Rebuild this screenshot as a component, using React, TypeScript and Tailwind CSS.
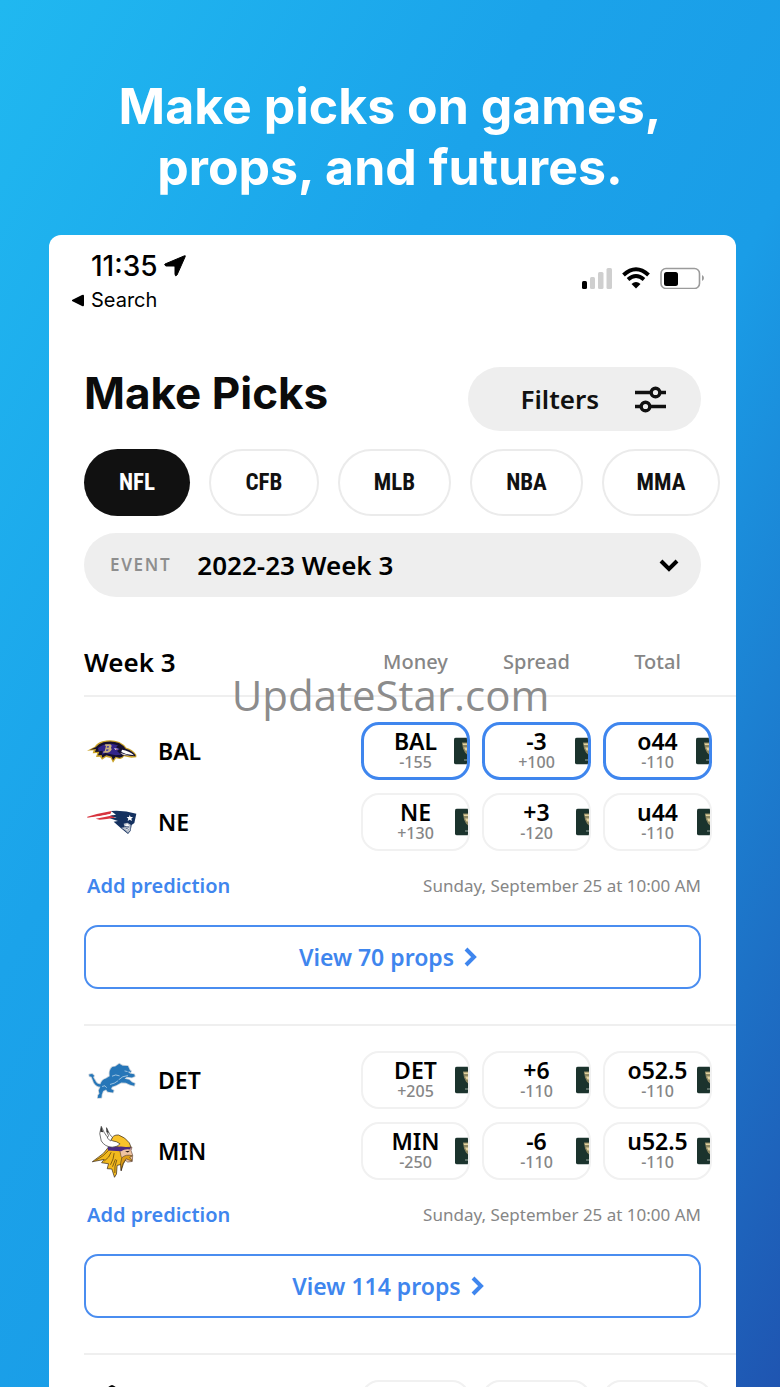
import { useState } from "react";
import { ChevronDown, ChevronRight } from "lucide-react";

type Odds = { label: string; price: string };

type Team = {
  code: string;
  logo: () => React.JSX.Element;
  odds: Odds[];
};

type Game = {
  id: string;
  teams: Team[];
  startsAt: string;
  props: number;
};

const LEAGUES = [
  { name: "NFL", width: "w-[106px]" },
  { name: "CFB", width: "w-[110px]" },
  { name: "MLB", width: "w-[113px]" },
  { name: "NBA", width: "w-[113px]" },
  { name: "MMA", width: "w-[118px]" },
];

function RavensLogo() {
  return (
    <svg viewBox="50 318 156 78" className="w-[52px] h-[26px]" aria-hidden="true">
      <path
        d="M53 356 L76 344 Q84 332 100 328 Q126 321 150 330 Q164 337 171 347 Q190 352 201 368 L201 376 L186 377 L164 373 Q160 382 151 381 L140 379 L131 392 L124 378 L110 375 L98 383 L92 374 L80 375 L84 363 L70 364 L73 355 Z"
        fill="#c9a227"
      />
      <path
        d="M62 353 L79 346 Q88 335 102 331 Q128 325 149 333 Q162 340 169 350 Q188 355 198 369 L198 373 L164 370 Q158 378 149 377 L139 374 L131 385 L127 374 L111 370 L99 377 L97 369 L86 370 L90 359 L77 360 L80 351 Z"
        fill="#16102e"
      />
      <path d="M86 348 Q100 335 126 335 L146 340 L140 346 L152 351 L143 357 L155 368 L140 370 L124 367 L108 363 L98 369 L100 356 L88 358 Z" fill="#33258a" />
      <path d="M158 353 Q180 356 194 370 L170 366 L156 360 Z" fill="#fff" />
      <path d="M152 362 L182 371 L160 368 Z" fill="#e8e6ef" />
      <path d="M108 337 h14 q8 2 3 10 q5 5 -1 10 q-4 5 -10 5 h-13 l2 -4 h3 l4 -17 h-4 z" fill="#cbb27a" />
      <path d="M113 342 h6 l-1 5 h-6 z M111 352 h7 l-2 5 h-6 z" fill="#54479b" />
      <path d="M134 348 L148 351 L138 354 Z" fill="#d7d2e6" />
      <path d="M140 351 l5 1 l-4 1 z" fill="#c62032" />
    </svg>
  );
}

function PatriotsLogo() {
  return (
    <svg viewBox="50 535 150 78" className="w-[50px] h-[26px]" aria-hidden="true">
      <path d="M51 558 Q84 548 124 541 L120 550 Q88 557 51 561 Z" fill="#d8343f" />
      <path d="M60 561 Q92 557 122 550 L118 556 Q94 561 60 563 Z" fill="#fff" />
      <path d="M76 564 Q104 559 128 554 L134 561 Q108 565 88 567 Z" fill="#d8343f" />
      <path
        d="M122 541 Q160 538 198 549 L192 577 L184 583 L181 600 L173 610 L152 593 L130 573 L143 571 L118 563 L139 561 L119 555 L137 552 Z"
        fill="#14315f"
      />
      <path d="M178 553 l3 6 7 0 -5 5 2 7 -7 -4 -6 4 2 -7 -5 -5 7 0 z" fill="#fff" />
      <path d="M160 579 L171 576 L181 582 L180 599 L173 607 L164 599 L153 591 L163 590 Z" fill="#b9c1cc" />
      <path d="M164 583 l8 -3 5 5 -9 3 z M165 594 l12 -2 -4 7 z" fill="#fff" />
      <path d="M162 587 l14 2 M166 592 l9 4" stroke="#14315f" strokeWidth="2" fill="none" />
    </svg>
  );
}

function LionsLogo() {
  return (
    <svg viewBox="48 62 156 118" className="w-[52px] h-[39px]" aria-hidden="true">
      <path
        d="M57 103 L66 101 L72 107 L69 111 L78 126 Q83 133 91 132 Q95 119 108 115 L119 108 Q116 89 127 80 L136 79 L148 70 L158 76 L174 77 L180 90 L184 93 L179 100 L193 102 L195 108 L186 112 L171 110 L164 116 L178 119 L186 126 L195 130 L193 137 L181 134 L168 128 L154 127 L139 135 L126 140 L123 147 L131 151 L129 157 L113 155 L108 148 L99 153 L95 163 L94 173 L83 174 L84 166 L88 161 L86 151 L91 140 Q79 140 71 127 L64 110 L58 108 Z"
        fill="#2676b8"
        stroke="#c9d3dc"
        strokeWidth="5"
        strokeLinejoin="round"
        paintOrder="stroke"
      />
      <path
        d="M126 108 Q137 101 149 107 M146 119 Q157 107 174 106 M120 133 Q135 130 144 122 M96 139 Q106 133 110 143 M164 92 L173 94"
        fill="none"
        stroke="#d9e8f3"
        strokeWidth="2"
      />
      <path d="M176 94 l6 1 -5 3 z" fill="#fff" />
    </svg>
  );
}

function VikingsLogo() {
  return (
    <svg viewBox="60 252 130 160" className="w-[43px] h-[53px]" aria-hidden="true">
      <path
        d="M116 315 L178 323 L173 343 L158 369 L151 391 L151 371 L139 374 L137 400 L131 410 L123 385 L109 384 L113 369 L92 366 L100 356 L64 363 Q84 348 98 337 Z"
        fill="#f2b91d"
        stroke="#2a1c14"
        strokeWidth="2"
      />
      <path d="M74 359 Q98 347 113 329 M100 361 Q116 350 121 334 M119 372 Q129 354 130 337 M132 397 Q130 378 138 357 M125 378 L134 355" stroke="#6b4a10" strokeWidth="2.5" fill="none" />
      <path d="M146 323 L184 319 L181 329 L186 343 L185 362 L171 364 L160 356 L151 348 Z" fill="#efc3a1" stroke="#3a2016" strokeWidth="1.5" />
      <path d="M121 296 Q126 281 143 282 Q164 289 176 306 L181 319 L150 321 L118 312 Z" fill="#f8c22b" stroke="#2a1c14" strokeWidth="2" />
      <path d="M111 315 Q130 319 150 317 L180 320 L179 326 Q162 323 151 331 L111 329 Z" fill="#4b2a82" />
      <path
        d="M91 256 Q82 278 91 300 Q102 318 124 319 Q141 318 148 309 Q138 301 126 300 Q108 296 91 256 Z"
        fill="#fff"
        stroke="#2c2c2c"
        strokeWidth="2"
      />
      <path d="M107 260 Q107 275 113 284 L109 291 L119 300 L125 289 L117 281 Z" fill="#fff" stroke="#2c2c2c" strokeWidth="2" />
      <path d="M91 256 L88 272 L97 274 Z M107 260 L107 273 L114 277 Z" fill="#333" />
      <path d="M153 351 Q165 339 185 345 L177 350 Q184 355 183 361 L166 354 L155 371 L151 388 Q146 371 153 351 Z" fill="#dd9c16" stroke="#2a1c14" strokeWidth="1.5" />
      <path d="M163 331 L178 330 L171 335 Z" fill="#2a1c14" />
    </svg>
  );
}

function SaintsLogo() {
  return (
    <svg viewBox="0 0 48 48" className="w-12 h-12" aria-hidden="true">
      <path
        d="M24 0 Q27 1 30 4 Q33 13 28 23 Q32 14 40 17 Q46 22 40 29 Q36 25 32 31 L34 35 L28 37 L24 48 L20 37 L14 35 L16 31 Q12 25 8 29 Q2 22 8 17 Q16 14 20 23 Q15 13 18 4 Q21 1 24 0 Z"
        fill="#000"
      />
    </svg>
  );
}

const GAMES: Game[] = [
  {
    id: "bal-ne",
    startsAt: "Sunday, September 25 at 10:00 AM",
    props: 70,
    teams: [
      {
        code: "BAL",
        logo: RavensLogo,
        odds: [
          { label: "BAL", price: "-155" },
          { label: "-3", price: "+100" },
          { label: "o44", price: "-110" },
        ],
      },
      {
        code: "NE",
        logo: PatriotsLogo,
        odds: [
          { label: "NE", price: "+130" },
          { label: "+3", price: "-120" },
          { label: "u44", price: "-110" },
        ],
      },
    ],
  },
  {
    id: "det-min",
    startsAt: "Sunday, September 25 at 10:00 AM",
    props: 114,
    teams: [
      {
        code: "DET",
        logo: LionsLogo,
        odds: [
          { label: "DET", price: "+205" },
          { label: "+6", price: "-110" },
          { label: "o52.5", price: "-110" },
        ],
      },
      {
        code: "MIN",
        logo: VikingsLogo,
        odds: [
          { label: "MIN", price: "-250" },
          { label: "-6", price: "-110" },
          { label: "u52.5", price: "-110" },
        ],
      },
    ],
  },
];

// Sportsbook badge that slides under the right edge of every odds button
function BookBadge() {
  return (
    <svg viewBox="0 0 13 27" className="absolute right-0 top-1/2 -translate-y-1/2 w-[13px] h-[27px]" aria-hidden="true">
      <path d="M2 0 H13 V27 H2 Q0 27 0 25 V2 Q0 0 2 0 Z" fill="#1b332d" />
      <path d="M8 5 H13 V17 L11 15 L9 11 Z" fill="#8d8762" />
      <path d="M8.5 6 h4.5 v1.5 h-4 z M10 10 h3 v3 h-1.5 z" fill="#e3d3a0" />
      <path d="M10 22 h3 v1 h-3 z" fill="#9aa79f" />
    </svg>
  );
}

function OddsButton({ odds, selected, onClick }: { odds: Odds; selected: boolean; onClick: () => void }) {
  return (
    <button
      type="button"
      aria-pressed={selected}
      onClick={onClick}
      className={`relative flex h-[58px] flex-col items-center justify-center overflow-hidden rounded-[18px] bg-white ${
        selected ? "border-3 border-[#3f86ee]" : "border-2 border-[#f1f1f1]"
      }`}
    >
      <span className="text-[23px] leading-[22px] font-semibold text-black">{odds.label}</span>
      <span className="text-base leading-5 font-medium text-[#868686]">{odds.price}</span>
      <BookBadge />
    </button>
  );
}

function StatusBar() {
  return (
    <div className="flex items-start justify-between pl-[22px] pr-8 pt-[14px] font-['Inter'] text-black">
      <div>
        <div className="flex items-center gap-[6px] pl-5 text-[28px] leading-[34px] font-medium">
          11:35
          <svg viewBox="0 0 22 22" className="w-[22px] h-[22px]" aria-hidden="true">
            <path d="M1 9 L20 1 Q22 0 21 2 L13 20 Q11 22 11 19 L11 12 Q11 11 10 11 L2 11 Q0 10 1 9 Z" fill="#000" stroke="#000" />
          </svg>
        </div>
        <div className="flex items-center gap-[7px] text-xl leading-[34px]">
          <svg viewBox="0 0 13 13" className="w-[13px] h-[13px]" aria-hidden="true">
            <path d="M1 6 L11 1 Q13 0 13 2 V11 Q13 13 11 12 L1 7 Z" fill="#000" />
          </svg>
          Search
        </div>
      </div>
      <div className="flex items-center gap-[10px] pt-[18px]">
        <svg viewBox="0 0 30 22" className="w-[30px] h-[22px]" aria-hidden="true">
          <rect x="0" y="14" width="5" height="8" rx="1.5" fill="#000" />
          <rect x="8" y="10" width="5" height="12" rx="1.5" fill="#cfcfcf" />
          <rect x="16" y="5" width="5.5" height="17" rx="1.5" fill="#cfcfcf" />
          <rect x="24.5" y="1" width="5.5" height="21" rx="1.5" fill="#cfcfcf" />
        </svg>
        <svg viewBox="0 0 28 22" className="w-7 h-[22px]" aria-hidden="true">
          <path d="M1.5 8 Q14 -3.5 26.5 8" fill="none" stroke="#000" strokeWidth="4" />
          <path d="M6 12.5 Q14 5.5 22 12.5" fill="none" stroke="#000" strokeWidth="3.8" />
          <path d="M9.5 17 Q14 13 18.5 17 L14 21.5 Z" fill="#000" />
        </svg>
        <svg viewBox="0 0 44 22" className="w-11 h-[22px]" aria-hidden="true">
          <rect x="1" y="1.5" width="38.5" height="20" rx="5" fill="none" stroke="#9b9b9b" strokeWidth="1.6" />
          <rect x="4" y="5" width="14" height="14" rx="2.5" fill="#000" />
          <path d="M42 8 Q44 9 44 11 Q44 13 42 14 Z" fill="#9b9b9b" />
        </svg>
      </div>
    </div>
  );
}

function GameSection({ game, picked, toggle }: { game: Game; picked: string[]; toggle: (key: string) => void }) {
  return (
    <section className="ml-[35px] border-t-2 border-[#efefef] pt-[25px] pb-[35px]">
      <div className="grid gap-[13px] pr-6">
        {game.teams.map((team) => {
          const Logo = team.logo;
          return (
            <div key={team.code} className="grid grid-cols-[1fr_109px_109px_109px] gap-3">
              <div className="flex items-center gap-[18px]">
                <div className="flex w-14 justify-center">
                  <Logo />
                </div>
                <span className="text-[23px] font-semibold text-black">{team.code}</span>
              </div>
              {team.odds.map((odds, i) => {
                const key = `${team.code}-${i}`;
                return <OddsButton key={key} odds={odds} selected={picked.includes(key)} onClick={() => toggle(key)} />;
              })}
            </div>
          );
        })}
      </div>

      <div className="mr-[35px]">
        <div className="flex h-[74px] items-center justify-between pb-1">
          <button type="button" className="pl-[3px] text-xl font-semibold text-[#3f86ee]">
            Add prediction
          </button>
          <span className="text-[17px] text-[#868686]">{game.startsAt}</span>
        </div>
        <a
          href={`#${game.id}`}
          className="flex h-16 items-center justify-center rounded-[14px] border-2 border-[#4a8df0] text-[23px] font-semibold text-[#3f86ee]"
        >
          View {game.props} props
          <ChevronRight className="w-8 h-8" strokeWidth={3} strokeLinecap="butt" strokeLinejoin="miter" />
        </a>
      </div>
    </section>
  );
}

export default function App() {
  const [league, setLeague] = useState("NFL");
  const [picked, setPicked] = useState<string[]>(["BAL-0", "BAL-1", "BAL-2"]);

  const toggle = (key: string) => {
    setPicked((prev) => (prev.includes(key) ? prev.filter((k) => k !== key) : [...prev, key]));
  };

  return (
    <div className="flex h-screen flex-col overflow-hidden bg-[linear-gradient(to_bottom_right,#20b8f0_0%,#1ba3ea_35%,#1a9de7_57%,#1f55b1_100%)] font-['Noto_Sans',sans-serif]">
      <h1 className="shrink-0 pt-[76px] pb-[37px] text-center font-['Inter'] text-[50px] leading-[61px] font-bold text-white">
        Make picks on games,
        <br />
        props, and futures.
      </h1>

      <main className="ml-[49px] mr-11 min-h-0 flex-1 overflow-hidden rounded-t-xl bg-white">
        <StatusBar />

        {/* Title and filters */}
        <div className="flex items-center justify-between px-[35px] pt-[50px]">
          <h2 className="pb-3 font-['Inter'] text-[44px] leading-[52px] font-bold text-[#0b0b0b]">Make Picks</h2>
          <button
            type="button"
            className="flex h-16 items-center gap-9 rounded-full bg-[#eeeeee] pl-[52px] pr-[35px] text-[26px] font-semibold text-[#111]"
          >
            Filters
            <svg viewBox="0 0 31 27" className="w-[31px] h-[27px]" fill="none" stroke="#111" strokeWidth="3.4" aria-hidden="true">
              <path d="M0 6.5 H16 M25 6.5 H31 M0 20.5 H6 M15 20.5 H31" />
              <circle cx="20.5" cy="6.5" r="4.3" />
              <circle cx="10.5" cy="20.5" r="4.3" />
            </svg>
          </button>
        </div>

        {/* Leagues */}
        <nav className="flex gap-[19px] overflow-hidden pl-[35px] pt-[18px]">
          {LEAGUES.map(({ name, width }) => (
            <button
              key={name}
              type="button"
              onClick={() => setLeague(name)}
              className={`h-[67px] shrink-0 rounded-full pt-[2px] font-['Liberation_Sans_Narrow','Roboto_Condensed',Roboto] text-[23px] font-bold ${width} ${
                league === name ? "bg-[#111] text-white" : "border-2 border-[#ebebeb] bg-white text-[#111]"
              }`}
            >
              {name}
            </button>
          ))}
        </nav>

        {/* Event picker */}
        <div className="relative mx-[35px] mt-[17px] flex h-16 items-center rounded-full bg-[#eeeeee] pl-[26px]">
          <label htmlFor="event" className="text-[17px] font-semibold tracking-widest text-[#8e8e8e]">
            EVENT
          </label>
          <select id="event" className="h-full flex-1 appearance-none bg-transparent pl-[26px] text-[26px] font-semibold text-black">
            <option>2022-23 Week 3</option>
          </select>
          <ChevronDown
            className="pointer-events-none absolute right-4 w-8 h-8 text-black"
            strokeWidth={3}
            strokeLinecap="butt"
            strokeLinejoin="miter"
          />
        </div>

        {/* Column titles */}
        <div className="mt-[49px] ml-[35px] grid grid-cols-[1fr_109px_109px_109px] items-center gap-3 pr-6 pb-[17px] text-center text-xl leading-8 font-medium text-[#868686]">
          <h3 className="text-left text-[26px] font-semibold text-black">Week 3</h3>
          <span>Money</span>
          <span>Spread</span>
          <span>Total</span>
        </div>

        <div className="relative">
          {GAMES.map((game) => (
            <GameSection key={game.id} game={game} picked={picked} toggle={toggle} />
          ))}
          <div className="pointer-events-none absolute inset-x-0 -top-8 pr-1 text-center font-['Open_Sans'] text-[42px] leading-[64px] text-[#8c8c8c]">
            UpdateStar.com
          </div>
        </div>

        {/* Next game, cut off by the bottom of the screen */}
        <section className="ml-[35px] grid grid-cols-[1fr_109px_109px_109px] gap-3 border-t-2 border-[#efefef] pt-[25px] pr-6">
          <div className="flex items-center pl-1">
            <SaintsLogo />
          </div>
          <div className="h-[58px] rounded-[18px] border-2 border-[#f1f1f1]" />
          <div className="h-[58px] rounded-[18px] border-2 border-[#f1f1f1]" />
          <div className="h-[58px] rounded-[18px] border-2 border-[#f1f1f1]" />
        </section>
      </main>
    </div>
  );
}
